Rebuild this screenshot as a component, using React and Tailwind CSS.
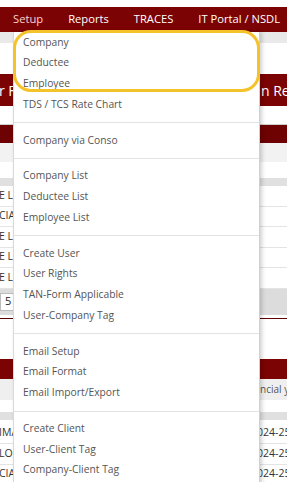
import React from "react";

const groups = [
  ["Company", "Deductee", "Employee", "TDS / TCS Rate Chart"],
  ["Company via Conso"],
  ["Company List", "Deductee List", "Employee List"],
  ["Create User", "User Rights", "TAN-Form Applicable", "User-Company Tag"],
  ["Email Setup", "Email Format", "Email Import/Export"],
  ["Create Client", "User-Client Tag", "Company-Client Tag"],
];

function Row({ left, right }) {
  return (
    <div className="h-[20.5px] border-b border-[#e4e4e4] flex items-center justify-between text-[10.5px] text-[#333] whitespace-nowrap">
      <span className="-ml-[1px]">{left}</span>
      <span className="w-[36px] overflow-hidden">{right}</span>
    </div>
  );
}

export default function App() {
  return (
    <div className="relative w-[287px] h-[482px] overflow-hidden bg-white font-['Open_Sans',sans-serif]">
      {/* page behind */}
      <div className="h-[7px]" />
      <nav className="h-[25px] bg-[#7b0303] flex items-center gap-[25px] pl-[13px] text-[11.2px] text-white whitespace-nowrap">
        <span className="text-[#f8d2d2]">Setup</span>
        <span>Reports</span>
        <span>TRACES</span>
        <span>IT Portal / NSDL</span>
      </nav>
      <div className="h-[11px] bg-[#e9e9e9]" />
      <div className="h-[31px]" />
      <div className="h-[32px] bg-[#7b0303] flex items-center justify-between text-white text-[14px] whitespace-nowrap">
        <span className="-ml-[1px]">r Form</span>
        <span className="w-[26px] overflow-hidden">n Return</span>
      </div>
      <div className="h-[19px] border-b border-[#cfcfcf]" />
      <div className="h-[18px] bg-[#6e0202]" />
      <div className="h-[19px] bg-[#f2f2f2]" />
      <div className="h-[16px]" />
      <div className="h-[8px] bg-[#e0e0e0]" />
      <Row left="E LIMITED" right="" />
      <Row left="CIAL LTD" right="" />
      <Row left="E LIMITED" right="" />
      <Row left="E LIMITED" right="" />
      <Row left="E LIMITED" right="" />
      <div className="h-[26px] bg-[#dcdcdc] flex items-center">
        <div className="w-[22px] h-[18px] bg-white border border-[#bbb] flex items-center pl-[4px] text-[11px] text-[#222]">
          5
        </div>
      </div>
      <div className="h-[3px]" />
      <div className="h-[1px] bg-[#5c0000]" />
      <div className="h-[40px]" />
      <div className="h-[20px] bg-[#7b0303]" />
      <div className="h-[21px] bg-[#efefef] flex items-center justify-end text-[10px] font-medium text-[#555] whitespace-nowrap">
        <span className="w-[27px] overflow-hidden">ncial year</span>
      </div>
      <div className="h-[12px]" />
      <div className="h-[8px] bg-[#e0e0e0]" />
      <div className="h-[4px]" />
      <Row left="IMA" right="2024-25" />
      <Row left="LOC" right="2024-25" />
      <Row left="CIA" right="2024-25" />

      {/* dropdown menu */}
      <div className="absolute left-[13px] top-[32px] w-[247px] h-[460px] bg-white border-l border-[#d9d9d9] border-r border-r-[#d0d0d0] shadow-[2px_0_4px_rgba(0,0,0,0.18)]">
        {groups.map((g, gi) => (
          <div key={gi}>
            {gi > 0 && (
              <div className="h-[15.2px] pt-[7.5px]">
                <div className="h-px bg-[#e3e3e3]" />
              </div>
            )}
            {g.map((item) => (
              <div
                key={item}
                className="h-[20.7px] flex items-center pl-[9px] text-[10.3px] text-[#555] whitespace-nowrap"
              >
                {item}
              </div>
            ))}
          </div>
        ))}
      </div>

      {/* yellow highlight annotation */}
      <div className="absolute left-[13px] top-[30px] w-[247px] h-[62px] border-[3.5px] border-[#f4c22b] rounded-[18px]" />
    </div>
  );
}
